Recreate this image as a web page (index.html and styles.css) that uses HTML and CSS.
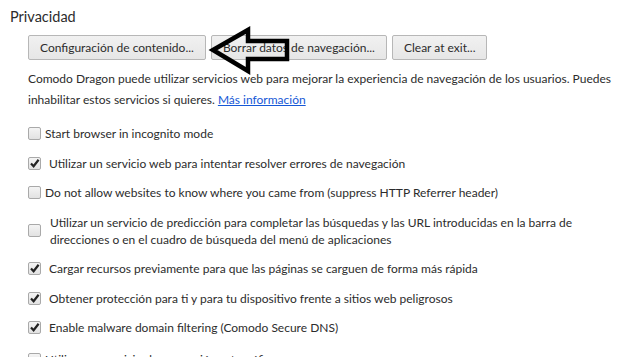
FILE: index.html
```html
<!DOCTYPE html>
<html lang="es">
<head>
    <meta charset="UTF-8">
    <meta name="viewport" content="width=device-width, initial-scale=1.0">
    <title>Configuración - Privacidad</title>
    <link rel="stylesheet" href="styles.css">
</head>
<body>
    <div class="section">
        <h3>Privacidad</h3>
        <div class="content">
            <div class="buttons">
                <button>Configuración de contenido...</button>
                <button>Borrar datos de navegación...</button>
                <button>Clear at exit...</button>
            </div>
            <p class="info">
                Comodo Dragon puede utilizar servicios web para mejorar la experiencia de navegación de los usuarios. Puedes<br>
                inhabilitar estos servicios si quieres. <a href="#">Más información</a>
            </p>
            <div class="options">
                <label class="option">
                    <span class="box"></span>
                    <span class="text">Start browser in incognito mode</span>
                </label>
                <label class="option checked">
                    <span class="box"><svg viewBox="0 0 13 13"><path d="M3 6.5 L5.6 9.2 L10.6 2.8"/></svg></span>
                    <span class="text">Utilizar un servicio web para intentar resolver errores de navegación</span>
                </label>
                <label class="option">
                    <span class="box"></span>
                    <span class="text">Do not allow websites to know where you came from (suppress HTTP Referrer header)</span>
                </label>
                <label class="option">
                    <span class="box"></span>
                    <span class="text wide">Utilizar un servicio de predicción para completar las búsquedas y las URL introducidas en la barra de<br>direcciones o en el cuadro de búsqueda del menú de aplicaciones</span>
                </label>
                <label class="option checked">
                    <span class="box"><svg viewBox="0 0 13 13"><path d="M3 6.5 L5.6 9.2 L10.6 2.8"/></svg></span>
                    <span class="text">Cargar recursos previamente para que las páginas se carguen de forma más rápida</span>
                </label>
                <label class="option checked">
                    <span class="box"><svg viewBox="0 0 13 13"><path d="M3 6.5 L5.6 9.2 L10.6 2.8"/></svg></span>
                    <span class="text">Obtener protección para ti y para tu dispositivo frente a sitios web peligrosos</span>
                </label>
                <label class="option checked">
                    <span class="box"><svg viewBox="0 0 13 13"><path d="M3 6.5 L5.6 9.2 L10.6 2.8"/></svg></span>
                    <span class="text">Enable malware domain filtering (Comodo Secure DNS)</span>
                </label>
                <label class="option last">
                    <span class="box"></span>
                    <span class="text">Utilizar un servicio de corrección ortográfica</span>
                </label>
            </div>
        </div>
    </div>

    <!-- annotation arrow drawn over the screenshot -->
    <svg class="arrow" width="634" height="357" viewBox="0 0 634 357">
        <polygon points="213,50 248,30 248,41 287,41 287,59 248,59 248,71"/>
    </svg>
</body>
</html>
```

FILE: styles.css
```css
body {
    font-family: Lato, "Liberation Sans", sans-serif;
    font-size: 12px;
    color: #2c2c2c;
    background: #ffffff;
    margin: 0;
    height: 357px;
    overflow: hidden;
}

.section {
    padding-left: 10px;
}

h3 {
    font-size: 14.5px;
    font-weight: normal;
    line-height: 18px;
    margin: 8px 0 0 0;
}

.content {
    padding-left: 18px;
}

.buttons {
    display: flex;
    gap: 5px;
    margin-top: 9px;
}

button {
    font-family: inherit;
    font-size: 12px;
    color: #2c2c2c;
    height: 25px;
    padding: 0 11px;
    background: linear-gradient(#f1f1f1, #e6e6e6);
    border: 1px solid #b7b7b7;
    border-radius: 2px;
}

.info {
    line-height: 21px;
    margin: 8px 0 0 0;
}

.info a {
    color: #1558d6;
    text-decoration: underline;
}

.options {
    display: flex;
    flex-direction: column;
    gap: 12.5px;
    margin-top: 15px;
}

.option {
    display: flex;
    align-items: center;
    line-height: 17px;
}

.option.last {
    margin-top: 2px;
}

.box {
    width: 11px;
    height: 11px;
    flex: none;
    border: 1px solid #a9a9a9;
    border-radius: 2px;
    background: linear-gradient(#f4f4f4, #e2e2e2);
    position: relative;
}

.box svg {
    position: absolute;
    left: -1px;
    top: -1px;
    width: 13px;
    height: 13px;
}

.box path {
    fill: none;
    stroke: #222;
    stroke-width: 2.2;
}

.text {
    margin-left: 4px;
}

.checked .text {
    margin-left: 8px;
}

.wide {
    margin-left: 9px;
}

.arrow {
    position: absolute;
    left: 0;
    top: 0;
    pointer-events: none;
}

.arrow polygon {
    fill: none;
    stroke: #000;
    stroke-width: 4.5;
}
```
